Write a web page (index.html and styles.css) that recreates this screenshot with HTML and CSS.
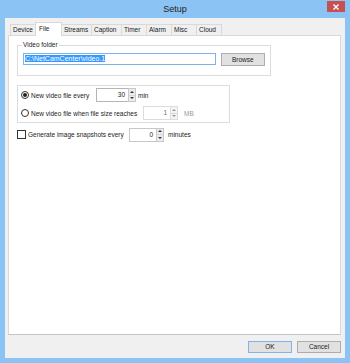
FILE: index.html
```html
<!DOCTYPE html>
<html lang="en">
<head>
    <meta charset="UTF-8">
    <title>Setup</title>
    <link rel="stylesheet" href="styles.css">
</head>
<body>
    <div class="window">
        <div class="titlebar">
            <span></span>
            <span class="title">Setup</span>
            <span class="close">
                <svg width="6" height="6" viewBox="0 0 6 6"><path d="M0.5 0.5 L5.5 5.5 M5.5 0.5 L0.5 5.5" stroke="#fff" stroke-width="1.4"/></svg>
            </span>
        </div>
        <div class="client">
            <div class="tabs">
                <div class="tab">Device</div>
                <div class="tab active">File</div>
                <div class="tab wide">Streams</div>
                <div class="tab wide">Caption</div>
                <div class="tab">Timer</div>
                <div class="tab">Alarm</div>
                <div class="tab">Misc</div>
                <div class="tab">Cloud</div>
            </div>
            <div class="panel">
                <div class="group folder-group">
                    <span class="group-label">Video folder</span>
                    <div class="textbox"><span class="selected">C:\NetCamCenter\video.1</span></div>
                    <div class="button browse">Browse</div>
                </div>

                <div class="group split-group">
                    <div class="row">
                        <span class="radio checked"></span>
                        <span class="label every-label">New video file every</span>
                        <div class="spin">
                            <div class="spin-field wide">30</div>
                            <div class="spin-arrows"><span class="up"></span><span class="down"></span></div>
                        </div>
                        <span class="unit">min</span>
                    </div>
                    <div class="row">
                        <span class="radio"></span>
                        <span class="label size-label">New video file when file size reaches</span>
                        <div class="spin disabled">
                            <div class="spin-field">1</div>
                            <div class="spin-arrows"><span class="up"></span><span class="down"></span></div>
                        </div>
                        <span class="unit unit-mb">MB</span>
                    </div>
                </div>

                <div class="row snap-row">
                    <span class="checkbox"></span>
                    <span class="label snap-label">Generate image snapshots every</span>
                    <div class="spin">
                        <div class="spin-field">0</div>
                        <div class="spin-arrows"><span class="up"></span><span class="down"></span></div>
                    </div>
                    <span class="unit unit-minutes">minutes</span>
                </div>
            </div>
            <div class="actions">
                <div class="button default">OK</div>
                <div class="button">Cancel</div>
            </div>
        </div>
    </div>
</body>
</html>
```

FILE: styles.css
```css
body {
    margin: 0;
    font-family: "Liberation Sans", Arial, sans-serif;
    font-size: 6.5px;
    color: #1a1a1a;
}
.window {
    width: 350px;
    height: 363px;
    box-sizing: border-box;
    padding: 0 5px 5px;
    background: #8bc3f4;
    display: flex;
    flex-direction: column;
}
.titlebar {
    height: 18px;
    display: grid;
    grid-template-columns: 18px 1fr 18px;
}
.title {
    text-align: center;
    font-size: 9px;
    line-height: 19px;
    color: #222;
}
.close {
    margin-top: 1px;
    height: 11px;
    background: #c75050;
    display: flex;
    align-items: center;
    justify-content: center;
}
.client {
    flex: 1;
    background: #f0f0f0;
    display: flex;
    flex-direction: column;
    padding: 4px 4px 5px 3px;
}
.tabs {
    display: flex;
    align-items: flex-end;
    height: 13px;
    padding-left: 2px;
}
.tab {
    width: 26px;
    height: 11px;
    box-sizing: border-box;
    padding: 0 2px;
    border: 1px solid #d9d9d9;
    border-bottom: none;
    margin-right: -1px;
    background: #f0f0f0;
    line-height: 10px;
    white-space: nowrap;
}
.tab.wide {
    width: 31px;
}
.tab.active {
    position: relative;
    z-index: 1;
    width: 27px;
    height: 14px;
    margin-bottom: -1px;
    background: #fff;
    padding-left: 3px;
    line-height: 11px;
}
.panel {
    flex: 1;
    border: 1px solid #d9d9d9;
    border-bottom-color: #c4c4c4;
    background: #fff;
    padding: 9px 8px 0;
}
.group {
    position: relative;
    box-sizing: border-box;
    border: 1px solid #dcdcdc;
}
.group-label {
    position: absolute;
    top: -5px;
    left: 4px;
    padding: 0 1px;
    background: #fff;
    line-height: 8px;
}
.folder-group {
    width: 254px;
    height: 31px;
    padding: 7px 5px 0;
    display: flex;
    align-items: flex-start;
}
.textbox {
    width: 195px;
    height: 12px;
    box-sizing: border-box;
    border: 1px solid #7eb4ea;
    padding: 0 1px;
    font-size: 7px;
    line-height: 10px;
}
.selected {
    background: #3399ff;
    color: #fff;
}
.button {
    box-sizing: border-box;
    height: 13px;
    border: 1px solid #adadad;
    background: #e1e1e1;
    text-align: center;
    line-height: 11px;
}
.browse {
    width: 45px;
    margin-left: 5px;
}
.split-group {
    width: 213px;
    height: 38px;
    margin-top: 9px;
    padding: 2px 3px;
    display: flex;
    flex-direction: column;
    gap: 4px;
}
.row {
    display: flex;
    align-items: center;
    height: 14px;
}
.radio {
    width: 8px;
    height: 8px;
    box-sizing: border-box;
    border: 1px solid #333;
    border-radius: 50%;
    margin-right: 2px;
    display: flex;
    align-items: center;
    justify-content: center;
}
.radio.checked::before {
    content: "";
    width: 4px;
    height: 4px;
    border-radius: 50%;
    background: #222;
}
.checkbox {
    width: 9px;
    height: 9px;
    box-sizing: border-box;
    border: 1px solid #333;
    margin-right: 2px;
}
.every-label { width: 65px; }
.size-label { width: 112px; }
.snap-label { width: 101px; }
.spin {
    display: flex;
    height: 14px;
}
.spin-field {
    width: 27px;
    box-sizing: border-box;
    border: 1px solid #c8c8c8;
    border-right: none;
    text-align: right;
    padding-right: 3px;
    line-height: 12px;
}
.spin-field.wide {
    width: 32px;
    border-color: #b5b5b5;
}
.spin-arrows {
    width: 8px;
    display: flex;
    flex-direction: column;
    border: 1px solid #c8c8c8;
    box-sizing: border-box;
}
.spin-arrows span {
    flex: 1;
    background: #ececec;
    display: flex;
    align-items: center;
    justify-content: center;
}
.spin-arrows .up { border-bottom: 1px solid #d8d8d8; }
.spin-arrows .up::before {
    content: "";
    border-left: 2px solid transparent;
    border-right: 2px solid transparent;
    border-bottom: 2px solid #333;
}
.spin-arrows .down::before {
    content: "";
    border-left: 2px solid transparent;
    border-right: 2px solid transparent;
    border-top: 2px solid #333;
}
.spin.disabled .spin-field {
    color: #6d6d6d;
    border-color: #dcdcdc;
}
.spin.disabled .spin-arrows { border-color: #dcdcdc; }
.spin.disabled .spin-arrows span { background: #f4f4f4; }
.spin.disabled .spin-arrows span::before { border-top-color: #999; border-bottom-color: #999; }
.unit { margin-left: 2px; }
.unit-mb { margin-left: 6px; color: #9a9a9a; }
.unit-minutes { margin-left: 4px; }
.snap-row {
    margin-top: 5px;
    height: 13px;
}
.actions {
    display: flex;
    justify-content: flex-end;
    gap: 5px;
    margin-top: 6px;
}
.actions .button {
    width: 44px;
    height: 12px;
    line-height: 10px;
}
.actions .default {
    border-color: #7eb4ea;
}
```
